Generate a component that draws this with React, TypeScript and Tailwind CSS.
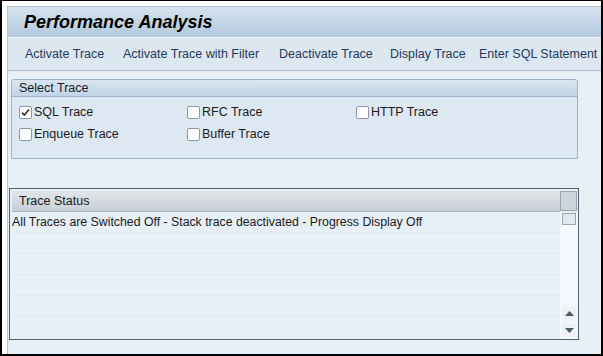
import React from 'react';

const font = { fontFamily: '"Liberation Sans", Arial, sans-serif' };

const Checkbox: React.FC<{ label: string; checked?: boolean }> = ({ label, checked }) => (
  <div className="flex items-center gap-[2px] text-[12.5px] text-[#1b1b1b] leading-none">
    <span className="flex h-[13px] w-[13px] items-center justify-center rounded-[2px] border border-[#8c9aa8] bg-white">
      {checked && (
        <svg width="9" height="9" viewBox="0 0 9 9">
          <path d="M1 4.6 L3.4 7 L8 1.6" fill="none" stroke="#333" strokeWidth="1.6" />
        </svg>
      )}
    </span>
    <span>{label}</span>
  </div>
);

export default function App() {
  const actions = [
    { label: 'Activate Trace', w: 'w-[98px]' },
    { label: 'Activate Trace with Filter', w: 'w-[156px]' },
    { label: 'Deactivate Trace', w: 'w-[111px]' },
    { label: 'Display Trace', w: 'w-[89px]' },
    { label: 'Enter SQL Statement', w: 'w-[120px]' },
  ];

  return (
    <div className="h-[356px] w-[603px] overflow-hidden border-x-2 border-t border-b-2 border-black bg-white" style={font}>
      <div className="flex h-full flex-col pl-[5px] pt-[5px]">
        <div className="flex flex-1 flex-col border-l border-t border-[#b5c4d3] bg-[#e7eff7]">
          {/* title bar */}
          <div className="flex h-[30px] items-center bg-gradient-to-b from-[#d5e3ef] to-[#b3c9dd] pl-[16px] text-[18px] font-bold italic text-black">
            Performance Analysis
          </div>

          {/* toolbar */}
          <div className="flex h-[34px] items-center border-b border-t border-b-[#a7b9ca] border-t-[#eef3f8] bg-[#dde7f0] pl-[17px] text-[12.5px] whitespace-nowrap text-[#1f3a5c]">
            {actions.map(a => (
              <span key={a.label} className={`${a.w} shrink-0`}>{a.label}</span>
            ))}
          </div>

          {/* select trace group */}
          <div className="ml-[3px] mr-[23px] mt-[8px] flex h-[80px] flex-col overflow-hidden rounded-t-[3px] border border-[#9cb3c9] bg-[#dee8f3]">
            <div className="flex h-[17px] items-center border-b border-[#9cb3c9] bg-gradient-to-b from-[#d9e5f0] to-[#c1d4e6] pl-[7px] text-[12.5px] text-[#1b1b1b]">
              Select Trace
            </div>
            <div className="grid grid-cols-[168px_169px_1fr] gap-y-[9px] pl-[7px] pt-[9px]">
              <Checkbox label="SQL Trace" checked />
              <Checkbox label="RFC Trace" />
              <Checkbox label="HTTP Trace" />
              <Checkbox label="Enqueue Trace" />
              <Checkbox label="Buffer Trace" />
            </div>
          </div>

          {/* trace status table */}
          <div className="ml-[1px] mr-[22px] mt-[29px] flex h-[152px] border border-[#4e6579] p-[2px] pb-0 pr-0">
            <div className="flex flex-1 flex-col">
              <div className="flex h-[21px] items-center border-b border-[#a5b2be] bg-gradient-to-b from-[#e2e6ea] to-[#c8cfd6] pl-[7px] text-[12.5px] text-[#1b1b1b]">
                Trace Status
              </div>
              {[0, 1, 2, 3, 4, 5].map(i => (
                <div key={i} className="flex h-[21px] items-center border-b border-[#dfe8f1] text-[12.3px] text-[#1b1b1b] last:border-b-0">
                  {i === 0 ? 'All Traces are Switched Off - Stack trace deactivated - Progress Display Off' : ''}
                </div>
              ))}
            </div>
            <div className="flex w-[18px] flex-col">
              <div className="h-[20px] w-[17px] border border-[#9aa6b1] bg-[#ccd3da]" />
              <div className="mt-[2px] flex flex-1 flex-col items-center bg-[#f5f8fb] pb-[2px]">
                <div className="h-[12px] w-[14px] border border-[#97a7b5] bg-[#dde8f1]" />
                <div className="flex-1" />
                <div className="flex h-[15px] w-[15px] items-center justify-center bg-[#eef2f6]">
                  <svg width="9" height="5" viewBox="0 0 9 5"><path d="M0 5 L4.5 0 L9 5 Z" fill="#4a5b6b" /></svg>
                </div>
                <div className="mt-[2px] flex h-[14px] w-[15px] items-center justify-center bg-[#eef2f6]">
                  <svg width="9" height="5" viewBox="0 0 9 5"><path d="M0 0 L9 0 L4.5 5 Z" fill="#4a5b6b" /></svg>
                </div>
              </div>
            </div>
          </div>
        </div>
      </div>
    </div>
  );
}
